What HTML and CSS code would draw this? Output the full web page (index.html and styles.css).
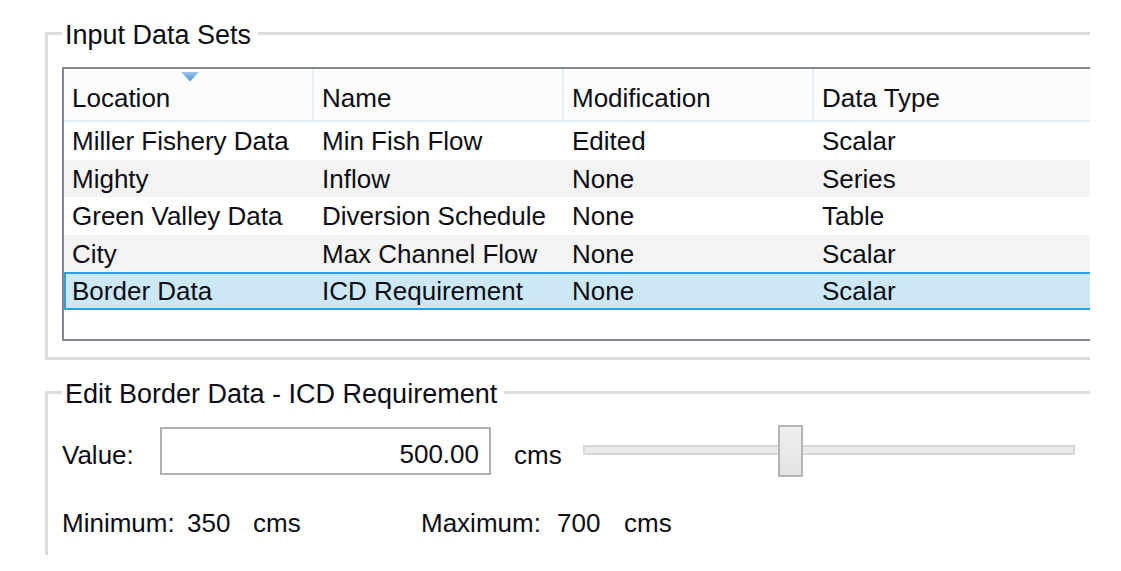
FILE: index.html
```html
<!DOCTYPE html>
<html lang="en">
<head>
<meta charset="utf-8">
<title>Input Data Sets</title>
<link rel="stylesheet" href="styles.css">
</head>
<body>
<div class="screen">
  <fieldset class="group group-data">
    <legend class="group-title">Input Data Sets</legend>
    <div class="list">
      <div class="list-head">
        <div class="head-col sorted">Location<svg class="sort-arrow" width="18" height="10" viewBox="0 0 18 10"><defs><linearGradient id="sg" x1="0" y1="0" x2="0" y2="1"><stop offset="0" stop-color="#9cc6ea"/><stop offset="1" stop-color="#4f94d0"/></linearGradient></defs><polygon points="0,0 18,0 9,9.5" fill="url(#sg)"/></svg></div>
        <div class="head-col">Name</div>
        <div class="head-col">Modification</div>
        <div class="head-col last">Data Type</div>
      </div>
      <div class="list-row">
        <span class="cell">Miller Fishery Data</span><span class="cell">Min Fish Flow</span><span class="cell">Edited</span><span class="cell">Scalar</span>
      </div>
      <div class="list-row alt">
        <span class="cell">Mighty</span><span class="cell">Inflow</span><span class="cell">None</span><span class="cell">Series</span>
      </div>
      <div class="list-row">
        <span class="cell">Green Valley Data</span><span class="cell">Diversion Schedule</span><span class="cell">None</span><span class="cell">Table</span>
      </div>
      <div class="list-row alt">
        <span class="cell">City</span><span class="cell">Max Channel Flow</span><span class="cell">None</span><span class="cell">Scalar</span>
      </div>
      <div class="list-row selected">
        <span class="cell">Border Data</span><span class="cell">ICD Requirement</span><span class="cell">None</span><span class="cell">Scalar</span>
      </div>
    </div>
  </fieldset>

  <fieldset class="group group-edit">
    <legend class="group-title">Edit Border Data - ICD Requirement</legend>
    <div class="value-row">
      <span class="value-label">Value:</span>
      <div class="value-box">500.00</div>
      <span class="value-unit">cms</span>
      <div class="slider">
        <div class="slider-track"></div>
        <div class="slider-thumb"></div>
      </div>
    </div>
    <div class="range-row">
      <span class="range-label min-label">Minimum:</span>
      <span class="range-value min-value">350</span>
      <span class="range-unit min-unit">cms</span>
      <span class="range-label max-label">Maximum:</span>
      <span class="range-value max-value">700</span>
      <span class="range-unit">cms</span>
    </div>
  </fieldset>
</div>
</body>
</html>
```
FILE: styles.css
```css
* {
  box-sizing: border-box;
}

html, body {
  margin: 0;
  padding: 0;
  background: #ffffff;
}

body {
  font-family: "Liberation Sans", Arial, sans-serif;
  font-size: 26px;
  color: #0d0d14;
}

.screen {
  width: 1090px;
  height: 571px;
  overflow: hidden;
  padding-top: 17px;
}

.group {
  margin: 0 0 0 45px;
  min-inline-size: 0;
  border: 3px solid #dcdcdc;
  border-right: none;
  padding: 0 0 0 14px;
}

.group-title {
  padding: 3px 7px 0 3px;
  line-height: 30px;
  font-size: 27px;
}

.group-data {
  padding-top: 17px;
  padding-bottom: 16px;
}

.group-edit {
  margin-top: 16px;
  padding-top: 16px;
  padding-bottom: 17px;
  border-bottom: none;
}

/* list view */
.list {
  height: 274px;
  margin-right: -20px;
  border: 2px solid #83878f;
  background: #ffffff;
}

.list-head {
  display: grid;
  grid-template-columns: 250px 250px 250px 1fr;
  height: 53px;
  background: #fcfcfc;
  border-bottom: 2px solid #e3ebf6;
}

.head-col {
  position: relative;
  padding: 14px 0 0 8px;
  line-height: 30px;
  border-right: 2px solid #e6eef8;
  white-space: nowrap;
}

.head-col.last {
  border-right: none;
}

.sort-arrow {
  position: absolute;
  left: 117px;
  top: 3px;
}

.list-row {
  display: grid;
  grid-template-columns: 250px 250px 250px 1fr;
  height: 37.5px;
  background: #ffffff;
}

.list-row.alt {
  background: #f4f4f4;
}

.list-row.selected {
  background: #cce8f7;
  box-shadow: inset 0 2px 0 #2ea1dc, inset 0 -2px 0 #2ea1dc, inset 2px 0 0 #2ea1dc;
}

.cell {
  padding: 2px 0 0 8px;
  line-height: 35.5px;
  white-space: nowrap;
}

/* edit group */
.value-row {
  display: flex;
  align-items: center;
  height: 52px;
}

.value-label {
  width: 98px;
  padding-top: 8px;
  line-height: 30px;
}

.value-box {
  width: 331px;
  height: 48px;
  border: 2px solid #adafb5;
  padding: 10px 10px 4px 10px;
  line-height: 30px;
  text-align: right;
  background: #ffffff;
}

.value-unit {
  margin-left: 23px;
  width: 69px;
  padding-top: 8px;
  line-height: 30px;
}

.slider {
  position: relative;
  width: 492px;
  height: 52px;
  display: flex;
  align-items: center;
}

.slider-track {
  width: 100%;
  height: 10px;
  margin-top: -3px;
  border: 2px solid #d7d7d7;
  background: #e8eaeb;
}

.slider-thumb {
  position: absolute;
  left: 195px;
  top: 0;
  width: 25px;
  height: 52px;
  border: 2px solid #b4b4b4;
  background: linear-gradient(#efefef, #e3e3e3);
}

.range-row {
  display: flex;
  margin-top: 31px;
  line-height: 30px;
  white-space: nowrap;
}

.min-label {
  width: 125px;
}

.min-value {
  width: 66px;
}

.min-unit {
  width: 168px;
}

.max-label {
  width: 136px;
}

.max-value {
  width: 67px;
}
```
